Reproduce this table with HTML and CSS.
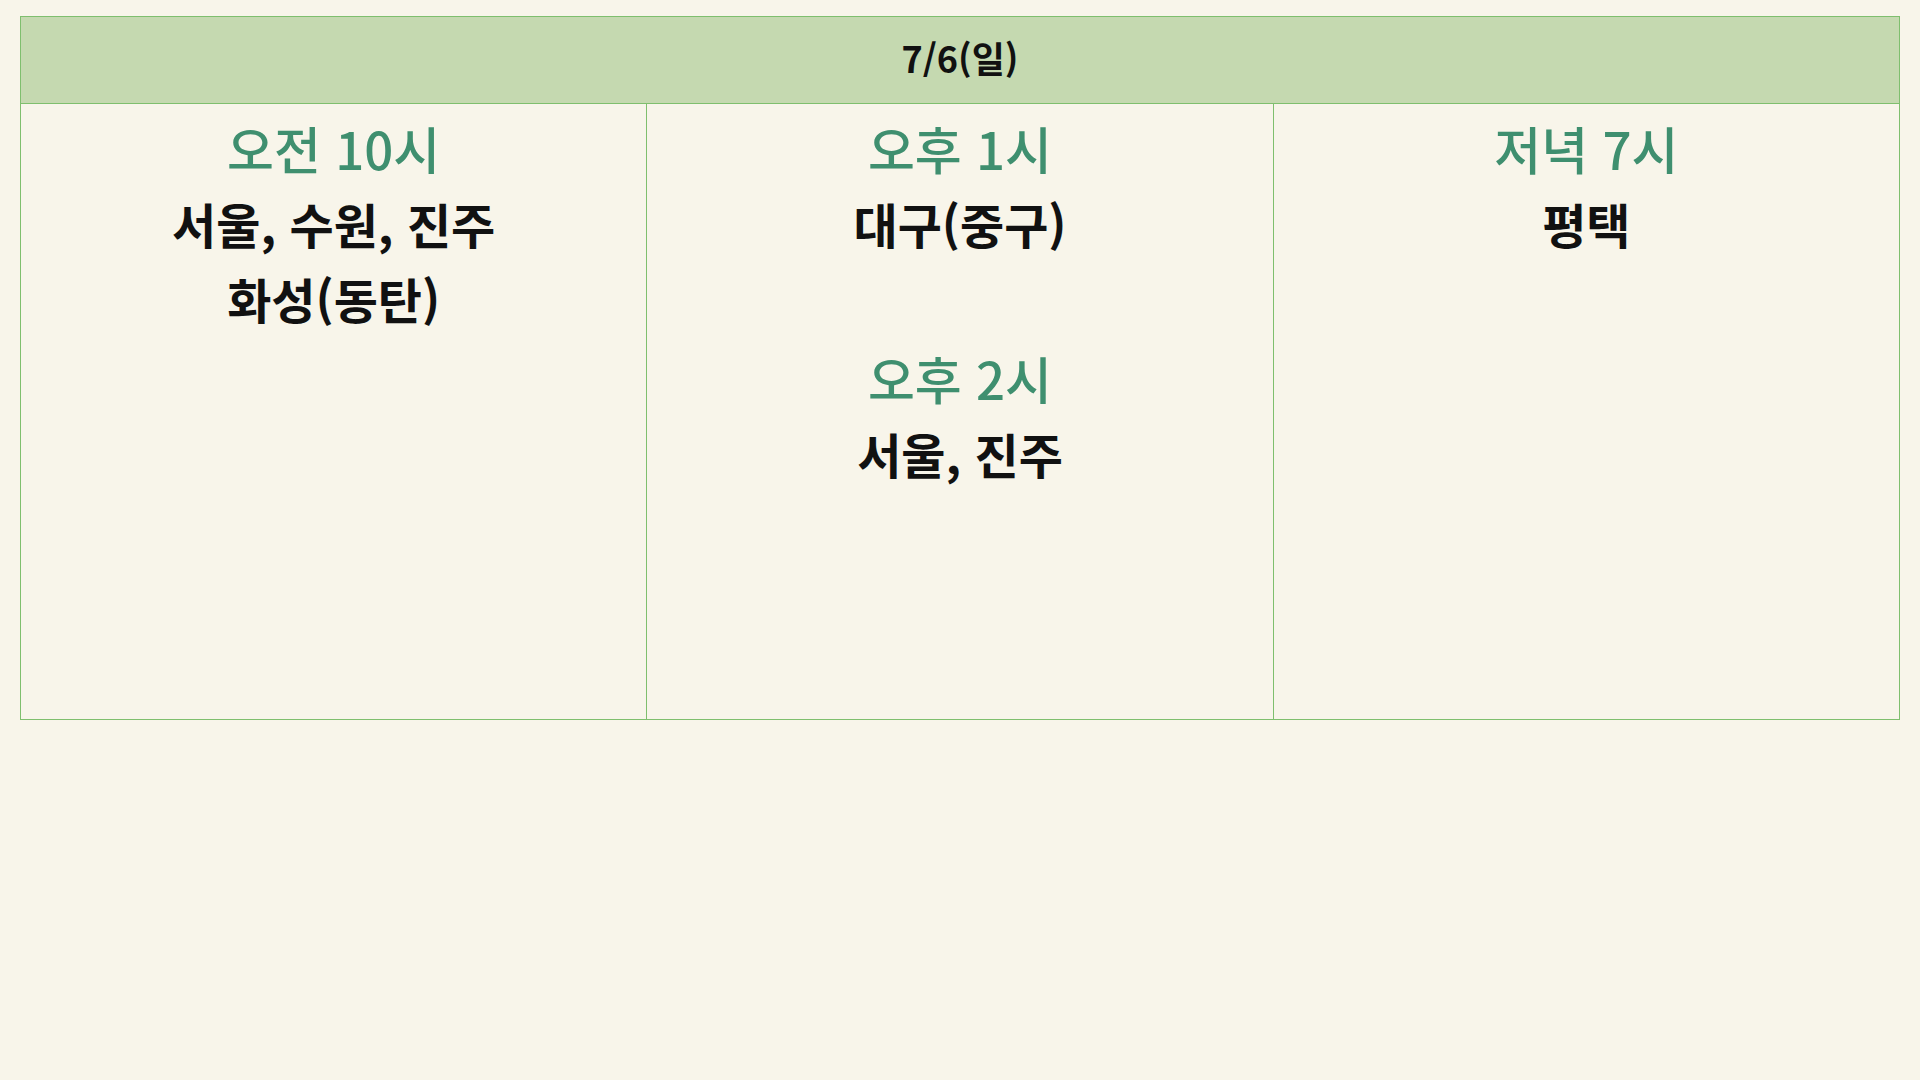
FILE: index.html
```html
<!DOCTYPE html>
<html lang="ko">
<head>
<meta charset="utf-8">
<title>7/6(일)</title>
<link rel="stylesheet" href="styles.css">
</head>
<body>
<table class="schedule">
  <thead>
    <tr><th colspan="3" class="day">7/6(일)</th></tr>
  </thead>
  <tbody>
    <tr>
      <td class="slot">
        <div class="time">오전 10시</div>
        <div class="place">서울, 수원, 진주</div>
        <div class="place">화성(동탄)</div>
      </td>
      <td class="slot">
        <div class="time">오후 1시</div>
        <div class="place">대구(중구)</div>
        <div class="spacer"></div>
        <div class="time">오후 2시</div>
        <div class="place">서울, 진주</div>
      </td>
      <td class="slot">
        <div class="time">저녁 7시</div>
        <div class="place">평택</div>
      </td>
    </tr>
  </tbody>
</table>
</body>
</html>
```
FILE: styles.css
```css
html, body {
  margin: 0;
  background: #f8f5ea;
}
body {
  padding: 16px 20px;
  font-family: "Noto Sans CJK KR", "Noto Sans", sans-serif;
}
.schedule {
  width: 1880px;
  border-collapse: collapse;
  table-layout: fixed;
}
.day {
  background: #c5d9b0;
  border: 1px solid #7fbf6e;
  height: 79px;
  padding: 0 0 7px;
  font-size: 36px;
  font-weight: 700;
  color: #111;
  text-align: center;
  vertical-align: middle;
  line-height: 1;
}
.slot {
  border: 1px solid #7fbf6e;
  height: 608px;
  vertical-align: top;
  text-align: center;
  padding: 7px 0 0;
}
.time {
  font-size: 51px;
  font-weight: 500;
  color: #3f8f6f;
  line-height: 75px;
}
.place {
  font-size: 48px;
  font-weight: 700;
  color: #111;
  line-height: 75px;
}
.spacer {
  height: 80px;
}
```
